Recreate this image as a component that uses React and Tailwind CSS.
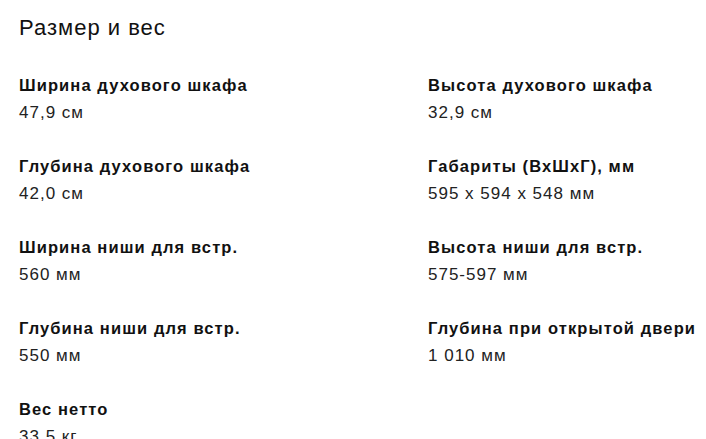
import React from 'react';

const specs = [
  ['Ширина духового шкафа', '47,9 см'],
  ['Высота духового шкафа', '32,9 см'],
  ['Глубина духового шкафа', '42,0 см'],
  ['Габариты (ВхШхГ), мм', '595 x 594 x 548 мм'],
  ['Ширина ниши для встр.', '560 мм'],
  ['Высота ниши для встр.', '575-597 мм'],
  ['Глубина ниши для встр.', '550 мм'],
  ['Глубина при открытой двери', '1 010 мм'],
  ['Вес нетто', '33,5 кг'],
];

const SpecItem = ({ label, value }) => (
  <div className="h-[81px] whitespace-nowrap">
    <p className="text-[16.5px] font-bold leading-[26px] tracking-[1.1px] text-[#111]">{label}</p>
    <p className="mt-[2px] text-[17px] leading-[26px] tracking-[1px] text-[#222]">{value}</p>
  </div>
);

export default function App() {
  return (
    <div className="h-[439px] overflow-hidden bg-white pl-[19px] pt-[14px] font-['Liberation_Sans',Arial,sans-serif]">
      <h2 className="text-[22px] leading-[28px] tracking-[1px] text-[#111]">Размер и вес</h2>
      <div className="mt-[30px] grid grid-cols-[409px_1fr]">
        {specs.map(([label, value]) => (
          <SpecItem key={label} label={label} value={value} />
        ))}
      </div>
    </div>
  );
}
